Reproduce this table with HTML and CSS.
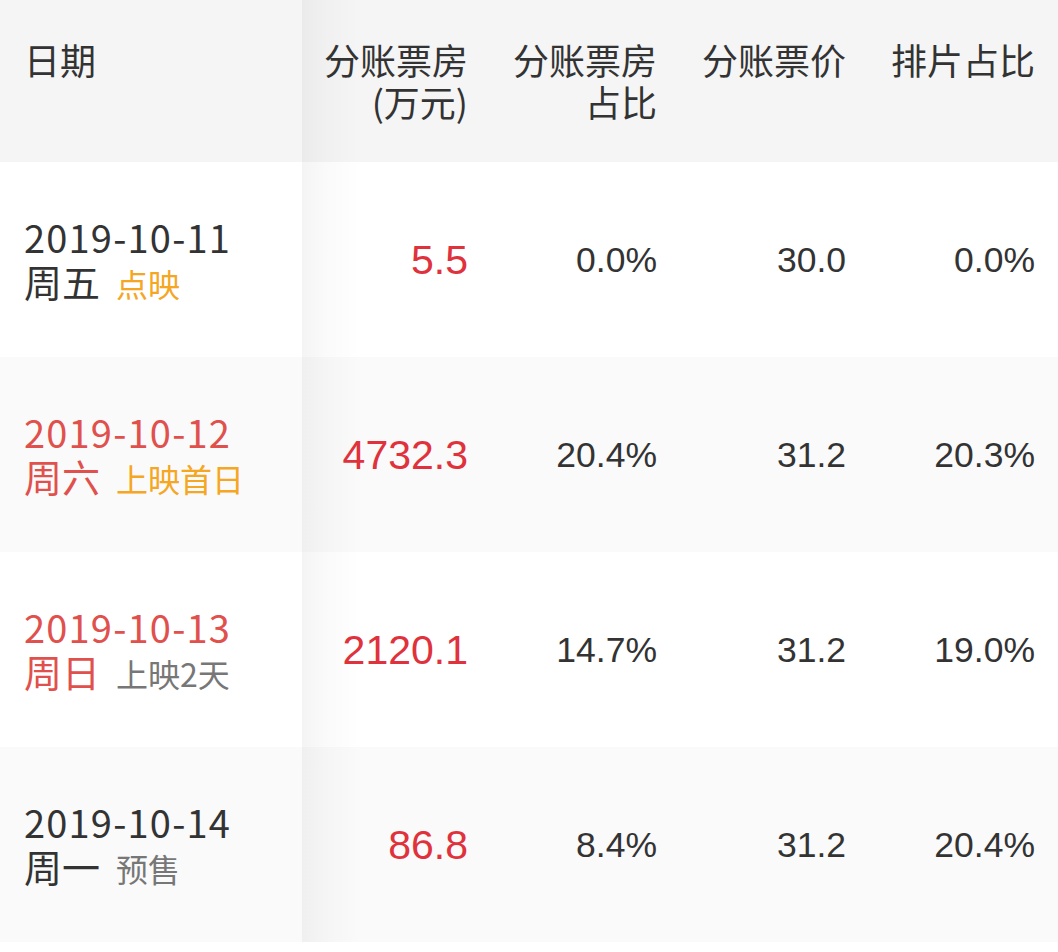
FILE: index.html
```html
<!DOCTYPE html>
<html lang="zh-CN">
<head>
<meta charset="utf-8">
<link rel="stylesheet" href="styles.css">
</head>
<body>
<div class="table">
  <div class="row head">
    <div class="cell date-cell"><div class="htext">日期</div></div>
    <div class="cell num"><div class="htext">分账票房<br>(万元)</div></div>
    <div class="cell num"><div class="htext">分账票房<br>占比</div></div>
    <div class="cell num"><div class="htext">分账票价</div></div>
    <div class="cell num"><div class="htext">排片占比</div></div>
  </div>
  <div class="row">
    <div class="cell date-cell">
      <div class="date">2019-10-11</div>
      <div class="day">周五<span class="tag orange">点映</span></div>
    </div>
    <div class="cell num"><span class="box">5.5</span></div>
    <div class="cell num"><span class="val">0.0%</span></div>
    <div class="cell num"><span class="val">30.0</span></div>
    <div class="cell num"><span class="val">0.0%</span></div>
  </div>
  <div class="row alt">
    <div class="cell date-cell red">
      <div class="date">2019-10-12</div>
      <div class="day">周六<span class="tag orange">上映首日</span></div>
    </div>
    <div class="cell num"><span class="box">4732.3</span></div>
    <div class="cell num"><span class="val">20.4%</span></div>
    <div class="cell num"><span class="val">31.2</span></div>
    <div class="cell num"><span class="val">20.3%</span></div>
  </div>
  <div class="row">
    <div class="cell date-cell red">
      <div class="date">2019-10-13</div>
      <div class="day">周日<span class="tag gray">上映2天</span></div>
    </div>
    <div class="cell num"><span class="box">2120.1</span></div>
    <div class="cell num"><span class="val">14.7%</span></div>
    <div class="cell num"><span class="val">31.2</span></div>
    <div class="cell num"><span class="val">19.0%</span></div>
  </div>
  <div class="row alt">
    <div class="cell date-cell">
      <div class="date">2019-10-14</div>
      <div class="day">周一<span class="tag gray">预售</span></div>
    </div>
    <div class="cell num"><span class="box">86.8</span></div>
    <div class="cell num"><span class="val">8.4%</span></div>
    <div class="cell num"><span class="val">31.2</span></div>
    <div class="cell num"><span class="val">20.4%</span></div>
  </div>
</div>
</body>
</html>
```
FILE: styles.css
```css
html, body {
  margin: 0;
  padding: 0;
  background: #ffffff;
}
body {
  width: 1058px;
  height: 952px;
  overflow: hidden;
  font-family: "Noto Sans CJK SC", "Noto Sans", sans-serif;
  color: #333333;
}
.table {
  display: flex;
  flex-direction: column;
}
.row {
  display: grid;
  grid-template-columns: 302px repeat(4, 189px);
  height: 195px;
  background: #ffffff;
}
.row.alt {
  background: #fafafa;
}
.row.head {
  height: 162px;
  background: #f5f5f5;
}
.cell {
  display: flex;
  flex-direction: column;
  justify-content: center;
  box-sizing: border-box;
}
.date-cell {
  position: relative;
  padding-left: 24px;
}
.date-cell::after {
  content: "";
  position: absolute;
  top: 0;
  bottom: 0;
  left: 100%;
  width: 58px;
  background: linear-gradient(to right, rgba(0,0,0,0.045), rgba(0,0,0,0.02) 40%, rgba(0,0,0,0));
  pointer-events: none;
}
.num {
  align-items: flex-end;
  padding-right: 23px;
  text-align: right;
}
.head .cell {
  justify-content: flex-start;
  padding-top: 38px;
}
.htext {
  font-size: 36px;
  line-height: 42px;
  color: #333333;
}
.date {
  font-size: 38px;
  line-height: 44px;
  letter-spacing: 1.2px;
}
.day {
  font-size: 38px;
  line-height: 44px;
}
.tag {
  font-size: 32px;
  margin-left: 16px;
}
.orange { color: #f5a623; }
.gray { color: #777777; }
.red { color: #e0504c; }
.box {
  font-family: "Liberation Sans", "Arial", sans-serif;
  font-size: 41px;
  line-height: 48px;
  color: #e0323c;
}
.val {
  font-family: "Liberation Sans", "Arial", sans-serif;
  font-size: 35.5px;
  line-height: 44px;
  color: #333333;
}
```
